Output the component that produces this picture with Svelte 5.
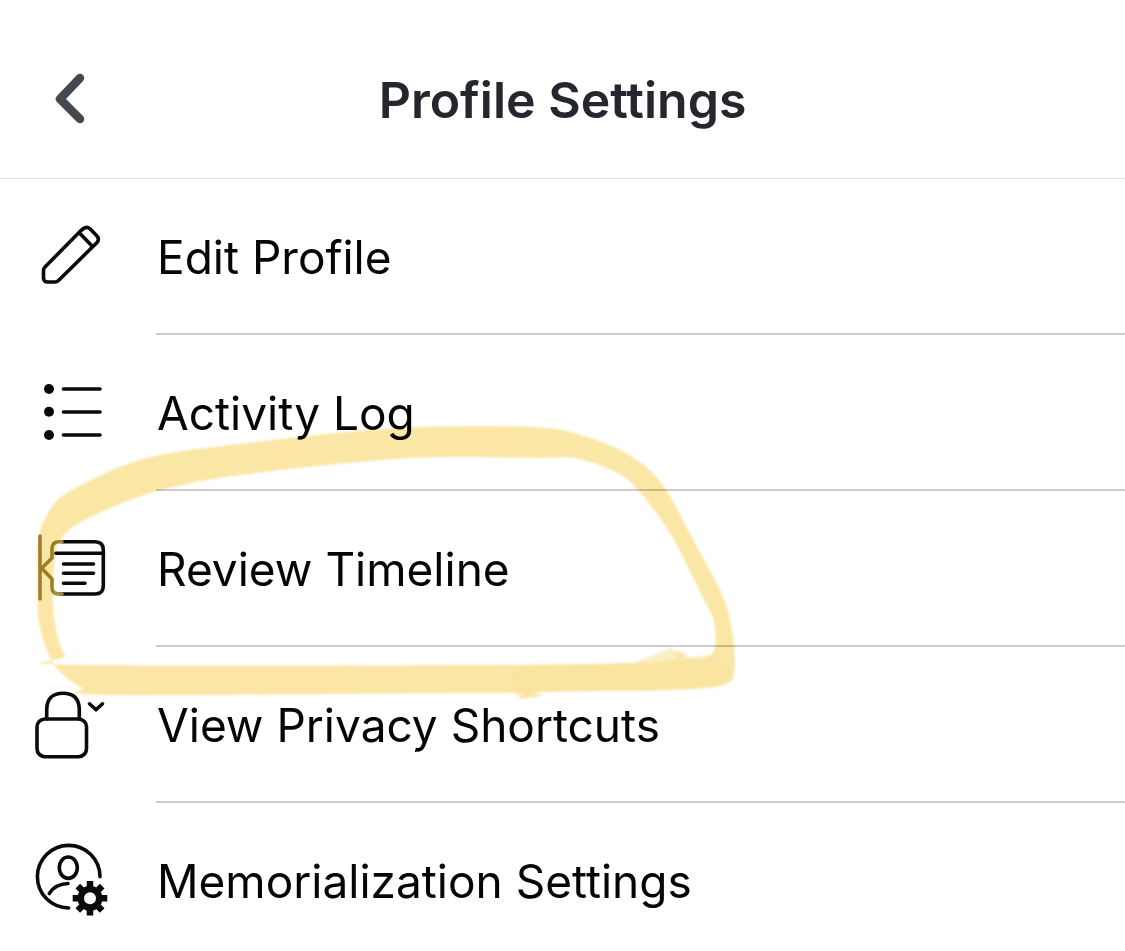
<script>
  const outer = [[38,543],[48,513],[72,490],[147,458],[256,442],[397,428],[534,427],[590,438],[634,458],[664,487],[695,543],[723,597],[733,637],[734,673],[723,685],[671,690],[539,692],[520,699],[511,693],[114,695],[81,687],[53,663],[39,623],[38,585]];
  const inner = [[55,557],[62,537],[91,517],[161,490],[256,473],[412,458],[539,458],[575,458],[615,472],[638,490],[671,535],[699,590],[714,623],[711,655],[678,658],[671,648],[633,663],[86,665],[65,655],[55,623],[53,590]];
  function smooth(p) {
    const n = p.length;
    let d = `M${p[0][0]} ${p[0][1]}`;
    for (let i = 0; i < n; i++) {
      const a = p[(i - 1 + n) % n], b = p[i], c = p[(i + 1) % n], e = p[(i + 2) % n];
      const c1x = b[0] + (c[0] - a[0]) / 6, c1y = b[1] + (c[1] - a[1]) / 6;
      const c2x = c[0] - (e[0] - b[0]) / 6, c2y = c[1] - (e[1] - b[1]) / 6;
      d += `C${c1x.toFixed(1)} ${c1y.toFixed(1)} ${c2x.toFixed(1)} ${c2y.toFixed(1)} ${c[0]} ${c[1]}`;
    }
    return d + 'Z';
  }
  const highlight = smooth(outer) + smooth(inner);
  const rows = ['Edit Profile', 'Activity Log', 'Review Timeline', 'View Privacy Shortcuts', 'Memorialization Settings'];
</script>

<div class="screen">
  <header class="top">
    <div class="back">
      <svg width="44" height="60" viewBox="0 0 44 60"><path d="M30 6 L10 27 L30 47" class="chev" /></svg>
    </div>
    <h1>Profile Settings</h1>
    <div></div>
  </header>

  <ul class="list">
    {#each rows as label, i}
      <li class="row">
        <span class="icon">
          <svg width="80" height="80" viewBox="0 0 80 80" class="ico">
            {#if i === 0}
              <path d="M13.5 61V53.5Q13.5 51.5 15 50L50.5 14 53.5 11.5Q56.7 9 60.2 12L66.8 18.8Q70 22.3 66.8 25.8L63 29.5 28.5 63.5Q27 65 25 65H17.5Q13.5 65 13.5 61Z" />
              <path d="M49.5 16 62.5 29.5" />
            {:else if i === 1}
              <circle cx="19" cy="16" r="5" class="solid" />
              <circle cx="19" cy="38.7" r="5" class="solid" />
              <circle cx="19" cy="62" r="5" class="solid" />
              <path d="M33.5 16H70M33.5 39H70M33.5 62H70" />
            {:else if i === 2}
              <path d="M32 12.7H65Q73.3 12.7 73.3 21V57Q73.3 65 65 65H30" />
              <path d="M26 24.3H73.3" />
              <path d="M33.5 35H63.5M33.5 44.3H63.5M33.5 54.3H55" />
              <path class="thin" d="M10 7V70" />
              <path class="thin" d="M32 12.7H29Q22 12.7 22 20V29L11.7 39.3 22 50V58Q22 65 29 65H32" />
            {:else if i === 3}
              <rect x="7" y="34" width="49.5" height="37.7" rx="8" />
              <path d="M16.7 34V25Q16.7 8.3 33 8.3T49.3 25V34" />
              <path d="M59.5 18.8 66 24.8 72.5 18.8" />
            {:else}
              <path d="M70 35.7A31.3 31.3 0 1 0 38.7 67" />
              <ellipse cx="38.3" cy="26.7" rx="9" ry="10.7" />
              <path d="M19.3 52.5Q25 43 38 42.5" />
              <circle cx="60" cy="57.3" r="12.5" class="solid" />
              <g class="teeth">
                <path d="M60 40V74.6M42.7 57.3H77.3M47.8 45.1 72.2 69.5M47.8 69.5 72.2 45.1" />
              </g>
              <circle cx="60" cy="57.3" r="6" class="hole" />
            {/if}
          </svg>
        </span>
        <span class="label">{label}</span>
      </li>
    {/each}
  </ul>

  <svg class="marker" width="1125" height="951" viewBox="0 0 1125 951">
    <path d={highlight} fill="#fae7a6" fill-rule="evenodd" />
    <path d="M515 668 L633 663 671 648 678 658 711 655 733 672 724 685 671 690 539 692 520 699 511 690Z" fill="#f9e39c" opacity="0.6" />
  </svg>
</div>

<style>
  :global(body) {
    margin: 0;
    background: #fff;
  }
  .screen {
    position: relative;
    width: 1125px;
    height: 951px;
    overflow: hidden;
    background: #fff;
    font-family: Inter, "Liberation Sans", sans-serif;
    color: #050505;
  }
  .top {
    display: grid;
    grid-template-columns: 1fr auto 1fr;
    align-items: center;
    height: 179px;
    box-sizing: border-box;
    padding-top: 22px;
    border-bottom: 1px solid #e2e2e2;
  }
  .back {
    display: flex;
    padding-left: 50px;
    padding-top: 4px;
  }
  .chev {
    fill: none;
    stroke: #444950;
    stroke-width: 8.5;
    stroke-linecap: round;
    stroke-linejoin: round;
  }
  h1 {
    margin: 0;
    font-size: 50px;
    font-weight: 600;
    color: #24272d;
  }
  .list {
    list-style: none;
    margin: 0;
    padding: 0;
  }
  .row {
    display: flex;
    align-items: center;
    height: 156px;
    box-sizing: border-box;
    position: relative;
  }
  .row::after {
    content: "";
    position: absolute;
    left: 156px;
    right: 0;
    bottom: 0;
    height: 2px;
    background: #cdcdcd;
  }
  .row:last-child::after {
    display: none;
  }
  .icon {
    display: flex;
    flex: none;
    width: 127px;
    padding-left: 30px;
  }
  .label {
    font-size: 46px;
    font-weight: 400;
  }
  .ico {
    fill: none;
    stroke: #0a0a0a;
    stroke-width: 3.6;
    stroke-linecap: round;
    stroke-linejoin: round;
  }
  .solid {
    fill: #0a0a0a;
    stroke: none;
  }
  .hole {
    fill: #fff;
    stroke: none;
  }
  .teeth {
    stroke-width: 6.5;
    stroke-linecap: butt;
  }
  .thin {
    stroke: #a08a3c;
  }
  .marker {
    position: absolute;
    inset: 0;
    mix-blend-mode: multiply;
    pointer-events: none;
    filter: blur(1px);
  }
</style>
